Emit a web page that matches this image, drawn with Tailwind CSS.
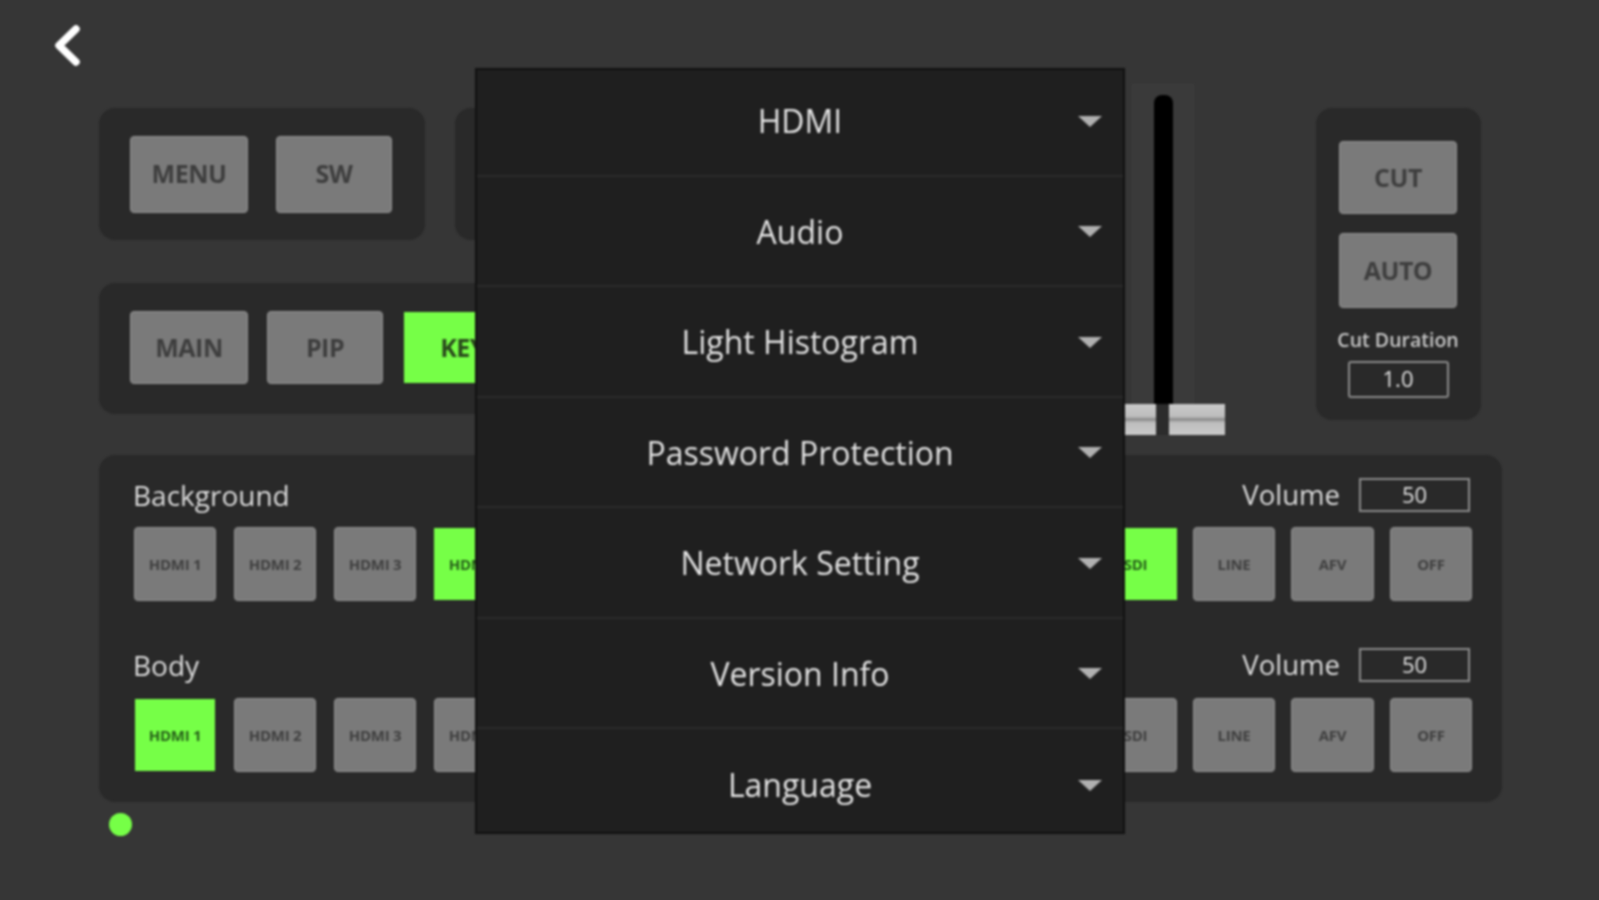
<!DOCTYPE html>
<html lang="en">
<head>
    <meta charset="UTF-8">
    <title>Switcher Settings</title>
    <script src="https://cdn.jsdelivr.net/npm/@tailwindcss/browser@4"></script>
</head>

<body class="bg-[#363636] overflow-hidden">

<div class="relative w-[1599px] h-[900px] overflow-hidden font-['Open_Sans','Noto_Sans',sans-serif] blur-[1px]">

    <!-- back -->
    <div class="h-[84px] pl-[54px] pt-[24px]">
        <svg width="28" height="44" viewBox="0 0 28 44" fill="none" stroke="#ffffff" stroke-width="7.500" stroke-linecap="round" stroke-linejoin="round"><path d="M22 5 L5 21.500 L22 38"/></svg>
    </div>

    <div class="pl-[99px]">
        <!-- top controls -->
        <div class="flex h-[371px]">
            <div class="w-[1033px] pt-[24px]">
                <div class="flex gap-[30px]">
                    <div class="w-[326px] h-[132px] rounded-[16px] bg-[#292929] flex items-center pl-[31px] gap-[28px]">
                        <button class="w-[118px] h-[77px] rounded-[4px] bg-[#7a7a7a] border border-[#929292] text-[#3e3e3e] text-[25px] font-bold tracking-[-0.5px]">MENU</button>
                        <button class="w-[116px] h-[77px] rounded-[4px] bg-[#7a7a7a] border border-[#929292] text-[#3e3e3e] text-[25px] font-bold tracking-[-0.5px]">SW</button>
                    </div>
                    <div class="w-[600px] h-[132px] rounded-[16px] bg-[#292929]"></div>
                </div>
                <div class="mt-[43px] w-[900px] h-[131px] pb-[2px] rounded-[16px] bg-[#292929] flex items-center pl-[31px]">
                    <button class="w-[118px] h-[73px] rounded-[4px] bg-[#7a7a7a] border border-[#929292] text-[#3e3e3e] text-[25px] font-bold tracking-[-0.5px]">MAIN</button>
                    <button class="w-[116px] h-[73px] ml-[19px] rounded-[4px] bg-[#7a7a7a] border border-[#929292] text-[#3e3e3e] text-[25px] font-bold tracking-[-0.5px]">PIP</button>
                    <button class="w-[117px] h-[71px] ml-[21px] bg-[#76ff47] text-[#2a4a1c] text-[25px] font-bold tracking-[-0.5px]">KEY</button>
                </div>
            </div>

            <!-- fader -->
            <div class="relative w-[62px] h-[340px] border-x border-t border-[#3d3d3d] bg-[#3a3a3a] flex justify-center">
                <div class="w-[19px] h-[320px] mt-[10px] rounded-t-[8px] bg-black"></div>
                <div class="absolute left-[-8px] top-[319px] w-[100px] h-[31px] bg-[linear-gradient(#cacaca_0,#bdbdbd_40%,#8a8a8a_50%,#bdbdbd_60%,#cacaca_100%)]"></div>
                <div class="absolute left-[23px] top-[319px] w-[13px] h-[31px] bg-[#2c2c2c]"></div>
            </div>

            <!-- cut / auto -->
            <div class="ml-[122px] pt-[24px]">
                <div class="w-[165px] h-[312px] rounded-[16px] pr-[1px] bg-[#292929] flex flex-col items-center pt-[33px]">
                    <button class="w-[118px] h-[73px] rounded-[4px] bg-[#7a7a7a] border border-[#929292] text-[#3e3e3e] text-[25px] font-bold tracking-[-0.5px]">CUT</button>
                    <button class="w-[118px] h-[75px] mt-[19px] rounded-[4px] bg-[#7a7a7a] border border-[#929292] text-[#3e3e3e] text-[25px] font-bold tracking-[-0.5px]">AUTO</button>
                    <div class="mt-[20px] text-[#c8c8c8] text-[19.500px] leading-[24px] font-semibold whitespace-nowrap">Cut Duration</div>
                    <div class="mt-[9px] w-[101px] h-[37px] rounded-[3px] border-2 border-[#8a8a8a] text-[#e0e0e0] text-[22px] leading-[31px] text-center">1.0</div>
                </div>
            </div>
        </div>

        <!-- sources -->
        <div class="w-[1403px] h-[347px] rounded-[16px] bg-[#292929] pl-[35px] pr-[30px] pt-[23px]">
            <div class="flex items-center justify-between h-[34px]">
                <span class="text-[#dcdcdc] text-[28px] -ml-[1px]">Background</span>
                <div class="flex items-center gap-[19px] mr-[2px]">
                    <span class="text-[#dcdcdc] text-[27.500px]">Volume</span>
                    <div class="w-[111px] h-[34px] border-2 border-[#8a8a8a] text-[#e0e0e0] text-[22px] leading-[29px] text-center">50</div>
                </div>
            </div>
            <div class="flex justify-between mt-[15px]">
                <div class="flex gap-[18px]">
                    <button class="w-[82px] h-[74px] rounded-[4px] bg-[#7a7a7a] border border-[#929292] text-[#404040] text-[15px] font-bold tracking-[-0.3px]">HDMI 1</button>
                    <button class="w-[82px] h-[74px] rounded-[4px] bg-[#7a7a7a] border border-[#929292] text-[#404040] text-[15px] font-bold tracking-[-0.3px]">HDMI 2</button>
                    <button class="w-[82px] h-[74px] rounded-[4px] bg-[#7a7a7a] border border-[#929292] text-[#404040] text-[15px] font-bold tracking-[-0.3px]">HDMI 3</button>
                    <button class="w-[82px] h-[72px] mt-[1px] bg-[#76ff47] text-[#27611a] text-[15px] font-bold tracking-[-0.3px]">HDMI 4</button>
                </div>
                <div class="flex gap-[16px]">
                    <button class="w-[83px] h-[72px] mt-[1px] bg-[#76ff47] text-[#27611a] text-[15px] font-bold tracking-[-0.3px]">SDI</button>
                    <button class="w-[82px] h-[74px] rounded-[4px] bg-[#7a7a7a] border border-[#929292] text-[#404040] text-[15px] font-bold tracking-[-0.3px]">LINE</button>
                    <button class="w-[83px] h-[74px] rounded-[4px] bg-[#7a7a7a] border border-[#929292] text-[#404040] text-[15px] font-bold tracking-[-0.3px]">AFV</button>
                    <button class="w-[82px] h-[74px] rounded-[4px] bg-[#7a7a7a] border border-[#929292] text-[#404040] text-[15px] font-bold tracking-[-0.3px]">OFF</button>
                </div>
            </div>

            <div class="flex items-center justify-between h-[34px] mt-[47px]">
                <span class="text-[#dcdcdc] text-[28px] -ml-[1px]">Body</span>
                <div class="flex items-center gap-[19px] mr-[2px]">
                    <span class="text-[#dcdcdc] text-[27.500px]">Volume</span>
                    <div class="w-[111px] h-[34px] border-2 border-[#8a8a8a] text-[#e0e0e0] text-[22px] leading-[29px] text-center">50</div>
                </div>
            </div>
            <div class="flex justify-between mt-[16px]">
                <div class="flex gap-[18px]">
                    <button class="w-[80px] h-[72px] mt-[1px] ml-[1px] mr-[1px] bg-[#76ff47] text-[#27611a] text-[15px] font-bold tracking-[-0.3px]">HDMI 1</button>
                    <button class="w-[82px] h-[74px] rounded-[4px] bg-[#7a7a7a] border border-[#929292] text-[#404040] text-[15px] font-bold tracking-[-0.3px]">HDMI 2</button>
                    <button class="w-[82px] h-[74px] rounded-[4px] bg-[#7a7a7a] border border-[#929292] text-[#404040] text-[15px] font-bold tracking-[-0.3px]">HDMI 3</button>
                    <button class="w-[82px] h-[74px] rounded-[4px] bg-[#7a7a7a] border border-[#929292] text-[#404040] text-[15px] font-bold tracking-[-0.3px]">HDMI 4</button>
                </div>
                <div class="flex gap-[16px]">
                    <button class="w-[83px] h-[74px] rounded-[4px] bg-[#7a7a7a] border border-[#929292] text-[#404040] text-[15px] font-bold tracking-[-0.3px]">SDI</button>
                    <button class="w-[82px] h-[74px] rounded-[4px] bg-[#7a7a7a] border border-[#929292] text-[#404040] text-[15px] font-bold tracking-[-0.3px]">LINE</button>
                    <button class="w-[83px] h-[74px] rounded-[4px] bg-[#7a7a7a] border border-[#929292] text-[#404040] text-[15px] font-bold tracking-[-0.3px]">AFV</button>
                    <button class="w-[82px] h-[74px] rounded-[4px] bg-[#7a7a7a] border border-[#929292] text-[#404040] text-[15px] font-bold tracking-[-0.3px]">OFF</button>
                </div>
            </div>
        </div>

        <div class="w-[23px] h-[23px] mt-[11px] ml-[10px] rounded-full bg-[#76ff47]"></div>
    </div>

    <!-- settings menu over the page -->
    <div class="absolute left-[475px] top-[68px] w-[650px] h-[766px] overflow-hidden bg-[#1f1f1f] border-2 border-[#111111] text-[#e2e2e2] text-[32px]">
        <div class="-mt-[4px]">
            <div class="grid grid-cols-[1fr_auto_1fr] items-center h-[110.500px] border-b-2 border-[#2b2b2b] px-[21px]">
                <span></span><span class="pt-[2px]">HDMI</span>
                <svg class="justify-self-end mt-[2px]" width="24" height="11" viewBox="0 0 24 11"><polygon points="0,0 24,0 12,11" fill="#b0b0b0"/></svg>
            </div>
            <div class="grid grid-cols-[1fr_auto_1fr] items-center h-[110.500px] border-b-2 border-[#2b2b2b] px-[21px]">
                <span></span><span class="pt-[2px]">Audio</span>
                <svg class="justify-self-end mt-[2px]" width="24" height="11" viewBox="0 0 24 11"><polygon points="0,0 24,0 12,11" fill="#b0b0b0"/></svg>
            </div>
            <div class="grid grid-cols-[1fr_auto_1fr] items-center h-[110.500px] border-b-2 border-[#2b2b2b] px-[21px]">
                <span></span><span class="pt-[2px]">Light Histogram</span>
                <svg class="justify-self-end mt-[2px]" width="24" height="11" viewBox="0 0 24 11"><polygon points="0,0 24,0 12,11" fill="#b0b0b0"/></svg>
            </div>
            <div class="grid grid-cols-[1fr_auto_1fr] items-center h-[110.500px] border-b-2 border-[#2b2b2b] px-[21px]">
                <span></span><span class="pt-[2px]">Password Protection</span>
                <svg class="justify-self-end mt-[2px]" width="24" height="11" viewBox="0 0 24 11"><polygon points="0,0 24,0 12,11" fill="#b0b0b0"/></svg>
            </div>
            <div class="grid grid-cols-[1fr_auto_1fr] items-center h-[110.500px] border-b-2 border-[#2b2b2b] px-[21px]">
                <span></span><span class="pt-[2px]">Network Setting</span>
                <svg class="justify-self-end mt-[2px]" width="24" height="11" viewBox="0 0 24 11"><polygon points="0,0 24,0 12,11" fill="#b0b0b0"/></svg>
            </div>
            <div class="grid grid-cols-[1fr_auto_1fr] items-center h-[110.500px] border-b-2 border-[#2b2b2b] px-[21px]">
                <span></span><span class="pt-[2px]">Version Info</span>
                <svg class="justify-self-end mt-[2px]" width="24" height="11" viewBox="0 0 24 11"><polygon points="0,0 24,0 12,11" fill="#b0b0b0"/></svg>
            </div>
            <div class="grid grid-cols-[1fr_auto_1fr] items-center h-[110.500px] px-[21px]">
                <span></span><span class="pt-[2px]">Language</span>
                <svg class="justify-self-end mt-[2px]" width="24" height="11" viewBox="0 0 24 11"><polygon points="0,0 24,0 12,11" fill="#b0b0b0"/></svg>
            </div>
        </div>
    </div>
</div>

</body>
</html>
